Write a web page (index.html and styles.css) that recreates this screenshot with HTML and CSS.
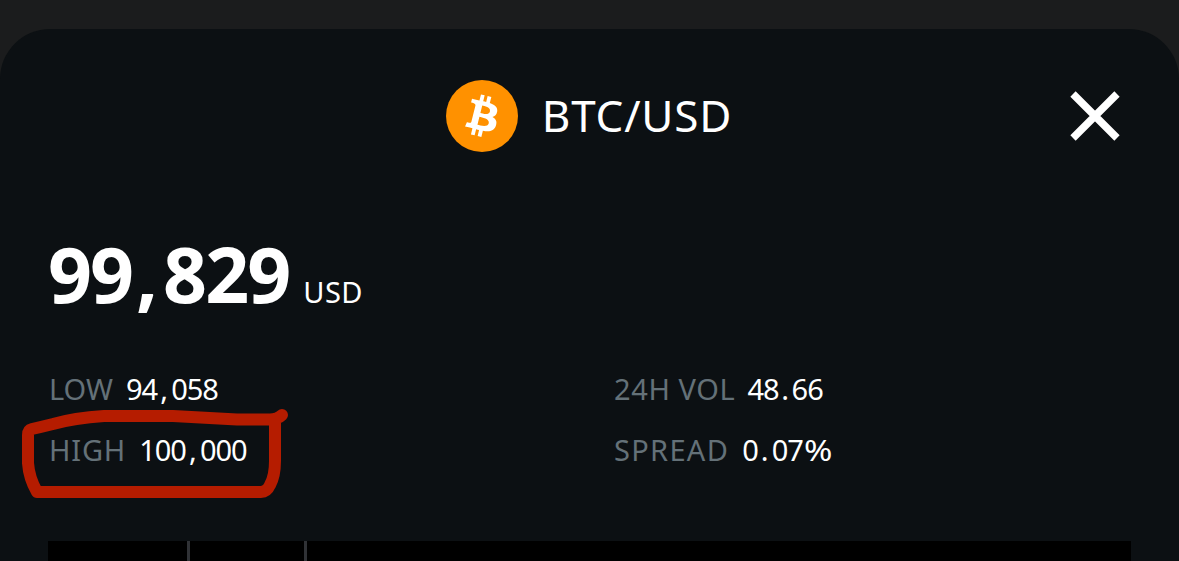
FILE: index.html
```html
<!DOCTYPE html>
<html lang="en">
<head>
    <meta charset="UTF-8">
    <meta name="viewport" content="width=device-width, initial-scale=1.0">
    <title>BTC/USD</title>
    <link rel="stylesheet" href="styles.css">
</head>
<body>
    <div class="sheet">
        <header class="header">
            <div class="pair">
                <svg class="coin" viewBox="0 0 72 72">
                    <circle cx="36" cy="36" r="36" fill="#ff9100"/>
                    <path transform="translate(2.800 2.700) scale(2.800)" fill="#fff" fill-rule="evenodd" d="M17.288 10.291c.24-1.590-.974-2.450-2.640-3.030l.54-2.153-1.315-.33-.525 2.107c-.345-.087-.705-.167-1.064-.25l.526-2.127-1.320-.33-.54 2.165c-.285-.067-.565-.132-.84-.2l-1.815-.45-.35 1.407s.975.225.955.236c.535.136.63.486.615.766l-1.477 5.920c-.075.166-.24.406-.614.314.015.02-.96-.24-.96-.24l-.66 1.510 1.710.426.93.242-.54 2.190 1.320.327.54-2.170c.36.1.705.19 1.050.273l-.51 2.154 1.320.33.545-2.190c2.240.427 3.930.257 4.640-1.774.57-1.637-.03-2.580-1.217-3.196.854-.193 1.500-.76 1.680-1.930zM14.278 14.511c-.404 1.640-3.157.75-4.050.53l.72-2.900c.896.23 3.757.67 3.330 2.370zM14.688 10.271c-.37 1.490-2.662.735-3.405.55l.654-2.640c.744.18 3.137.524 2.750 2.084z"/>
                </svg>
                <h1 class="title">BTC/USD</h1>
            </div>
            <svg class="close" viewBox="0 0 50 50">
                <path d="M3 3L47 47M47 3L3 47" stroke="#fff" stroke-width="7.500"/>
            </svg>
        </header>

        <div class="price"><span class="amount">99<span class="comma">,</span>829</span><span class="currency">USD</span></div>

        <div class="stats">
            <div class="stat low"><span class="label">LOW</span><span class="value">94<span class="comma">,</span>058</span></div>
            <div class="stat vol"><span class="label">24H VOL</span><span class="value">48<span class="comma">.</span>66</span></div>
            <div class="stat high">
                <span class="label">HIGH</span><span class="value">100<span class="comma">,</span>000</span>
                <svg class="marker" viewBox="0 0 270 94">
                    <path d="M261 11Q257 15 249 15.500H216L152 12H83Q53 14 32 20Q20 23 11 25Q7 26 7 31V59Q8 74 16 88H240Q246 88 249 81Q254 72 254 57V18"/>
                </svg>
            </div>
            <div class="stat spread"><span class="label">SPREAD</span><span class="value">0<span class="comma">.</span>07<span class="percent">%</span></span></div>
        </div>

        <div class="chart">
            <span class="line"></span>
            <span class="line"></span>
        </div>
    </div>
</body>
</html>
```
FILE: styles.css
```css
* {
    box-sizing: border-box;
}
body {
    margin: 0;
    height: 561px;
    padding-top: 29px;
    overflow: hidden;
    background: #1b1c1d;
    color: #fff;
    font-family: "Noto Sans", sans-serif;
}
.sheet {
    height: 532px;
    padding: 51px 48px 0;
    border-radius: 50px 50px 0 0;
    background: #0c1013;
}
.header {
    display: grid;
    grid-template-columns: 50px 1fr 50px;
    align-items: center;
    height: 72px;
    padding-right: 11px;
}
.pair {
    grid-column: 2;
    display: flex;
    align-items: center;
    justify-content: center;
    gap: 24px;
    padding-left: 10px;
}
.coin {
    width: 72px;
    height: 72px;
}
.title {
    margin: 0;
    font-size: 44px;
    font-weight: 400;
    line-height: 70px;
    padding-bottom: 2px;
    letter-spacing: 0.8px;
}
.close {
    width: 50px;
    height: 50px;
}
.price {
    display: flex;
    align-items: baseline;
    height: 100px;
    margin-top: 72px;
    line-height: 100px;
}
.amount {
    font-size: 77px;
    font-weight: 700;
    letter-spacing: -2px;
}
.amount .comma {
    display: inline-block;
    width: 31px;
    padding-right: 3px;
    text-align: center;
}
.currency {
    margin-left: 14px;
    font-size: 29px;
    letter-spacing: 0.5px;
}
.stats {
    display: grid;
    grid-template-columns: 565px 1fr;
    grid-template-rows: 61px 61px;
    margin-top: 34px;
    padding-left: 1px;
    font-size: 29px;
    line-height: 61px;
}
.stat {
    display: flex;
    position: relative;
    white-space: nowrap;
}
.label {
    color: #647178;
    letter-spacing: 0.6px;
}
.low .label {
    letter-spacing: 0;
}
.high .label {
    letter-spacing: 0.8px;
}
.spread .label {
    letter-spacing: 1.3px;
}
.value {
    position: relative;
    z-index: 1;
    margin-left: 13px;
    letter-spacing: -1px;
}
.vol .value {
    margin-left: 12px;
}
.value .comma {
    display: inline-block;
    width: 14px;
    padding-right: 1px;
    text-align: center;
}
.vol .comma {
    width: 13px;
}
.percent {
    display: inline-block;
    margin-left: 1px;
    transform: scaleX(1.180);
    transform-origin: left;
}
/* hand-drawn loop around the daily high */
.marker {
    position: absolute;
    left: -28px;
    top: -15px;
    width: 270px;
    height: 94px;
    overflow: visible;
    fill: none;
    stroke: #b51c00;
    stroke-width: 12;
    stroke-linecap: round;
    stroke-linejoin: round;
}
.chart {
    display: flex;
    gap: 114px;
    height: 20px;
    width: 1083px;
    margin-top: 61px;
    padding-left: 139px;
    background: #000;
}
.line {
    width: 3px;
    background: #303236;
}
```
